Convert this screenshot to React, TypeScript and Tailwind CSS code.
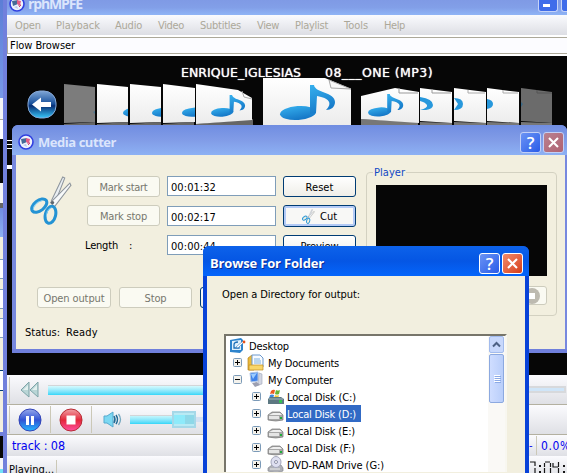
import { useLayoutEffect, useRef, useState, type ReactNode } from "react";

/** Text tracked so that it fills a given width. */
function Fit({ w, className = "pt-[2px]", children }: { w: number; className?: string; children: string }) {
  const ref = useRef<HTMLSpanElement>(null);
  const [spacing, setSpacing] = useState<number | null>(null);
  useLayoutEffect(() => {
    if (ref.current && spacing === null) {
      setSpacing((w - ref.current.getBoundingClientRect().width) / children.length);
    }
  }, [w, children, spacing]);
  return (
    <span ref={ref} className={`inline-block shrink-0 self-auto whitespace-pre ${className}`} style={{ letterSpacing: `${spacing ?? 0}px` }}>
      {children}
    </span>
  );
}

function AppIcon() {
  return (
    <svg width="16" height="16" viewBox="0 0 16 16" className="shrink-0">
      <circle cx="8" cy="8" r="7" fill="#eef2fc" stroke="#3040e0" strokeWidth="1.6" />
      <path d="M3 5l6-1v4l-5 2z" fill="#456a98" />
      <path d="M8 4l4 1-1 4-3-1z" fill="#e45b86" />
      <path d="M5 11l3-1 1 3z" fill="#b9c8ef" />
      <path d="M9 9l3 0-2 2" fill="none" stroke="#d0406b" />
    </svg>
  );
}

function Scissors({ size, h }: { size: number; h: number }) {
  return (
    <svg width={size} height={h} viewBox="0 0 42 48" className="shrink-0">
      <path d="M37 8L41 9 26 27 20 32z" fill="#d3cdbb" />
      <path d="M21 24L32 1l2 1-9 23z" fill="#e9eef2" stroke="#8c949c" strokeWidth="1" />
      <path d="M20 26L39 7l1 2-16 21z" fill="#f7f9fa" stroke="#8c949c" strokeWidth="1" />
      <circle cx="22" cy="26" r="1.6" fill="#5c6670" />
      <ellipse cx="9" cy="29" rx="8.5" ry="5" transform="rotate(-38 9 29)" fill="#f2efdf" stroke="#2493d4" strokeWidth="3" />
      <ellipse cx="20" cy="38" rx="5" ry="8.5" transform="rotate(14 20 38)" fill="#f2efdf" stroke="#2493d4" strokeWidth="3" />
      <path d="M3 33q1-7 9-9M16 40q0-7 5-9" fill="none" stroke="#7ccbf2" strokeWidth="1" />
    </svg>
  );
}

function Note({ x, y, s = 1 }: { x: number; y: number; s?: number }) {
  return (
    <g transform={`translate(${x} ${y}) scale(${s})`}>
      <ellipse cx="18" cy="28" rx="18" ry="7" transform="rotate(-4 18 28)" fill="url(#note)" />
      <path d="M30 0h4c1 8 21 7 21 17 0 5-4 8-9 8 7-7 3-12-9-14l-1 17-6 1z" fill="url(#note)" />
    </g>
  );
}

function Covers() {
  return (
    <svg width="560" height="47" viewBox="7 78 560 47" className="block shrink-0">
      <defs>
        <linearGradient id="note" x1="0" y1="0" x2="0.3" y2="1">
          <stop offset="0" stopColor="#36b0ee" />
          <stop offset="1" stopColor="#1679c8" />
        </linearGradient>
        <linearGradient id="orb" x1="0" y1="0" x2="0" y2="1">
          <stop offset="0" stopColor="#7fa6d6" />
          <stop offset="0.48" stopColor="#174f9a" />
          <stop offset="0.55" stopColor="#072d73" />
          <stop offset="1" stopColor="#38c8fa" />
        </linearGradient>
        <linearGradient id="page" x1="0" y1="0" x2="0" y2="1">
          <stop offset="0" stopColor="#ffffff" />
          <stop offset="1" stopColor="#ececec" />
        </linearGradient>
        <clipPath id="l2"><path d="M97 84h31v41H97z" /></clipPath>
        <clipPath id="l3"><path d="M130 84h31v41h-31z" /></clipPath>
        <clipPath id="l4"><path d="M163 84h32v41h-32z" /></clipPath>
        <clipPath id="r2"><path d="M420 84h32v41h-32z" /></clipPath>
      </defs>
      <rect x="28" y="91" width="28" height="27" rx="12" fill="url(#orb)" stroke="#87a9d8" strokeWidth="1" />
      <path d="M32 104.500l9-7v4.500h10v5H41v4.500z" fill="#fff" />
      <path d="M64 124l31-2v3H64zM97 124l31-2v3H97zM130 124l31-2v3h-31zM163 124l31-2v3h-31zM196 124l57-5v6h-57z" fill="#666" />
      <path d="M64 84l31 3v35l-31 1z" fill="#7c7c7c" />
      <path d="M93 112l2-1v3z" fill="#4f7890" />
      <path d="M97 84l31 3v35l-31 1z" fill="url(#page)" />
      <path d="M130 84l31 3v35l-31 1z" fill="url(#page)" />
      <path d="M163 84l32 4v34l-32 1z" fill="url(#page)" />
      <path d="M196 84l42 6 14 8v22l-56 4z" fill="url(#page)" />
      <path d="M242 91l2 6 8 2" fill="none" stroke="#aaa" />
      <g clipPath="url(#l2)"><Note x={123} y={94} s={0.65} /></g>
      <g clipPath="url(#l3)"><Note x={152} y={94} s={0.65} /></g>
      <g clipPath="url(#l4)"><Note x={182} y={94} s={0.65} /></g>
      <Note x={211} y={95} s={0.62} />
      <path d="M263 78h62l26 11v36h-88z" fill="url(#page)" />
      <path d="M329 80l2 8 20 1z" fill="#f8f8f8" stroke="#a8a8a8" strokeWidth="1" />
      <Note x={280} y={85} />
      <path d="M361 119l57 3v3h-57z" fill="#777" />
      <path d="M420 122l32 1v2h-32zM454 122l32 1v2h-32zM487 122l32 1v2h-32zM521 122l31 1v2h-31z" fill="#777" />
      <path d="M361 96l34-8 24 4v31l-58-4z" fill="url(#page)" />
      <path d="M399 88v5l19 0" fill="none" stroke="#999" />
      <Note x={368} y={94} s={0.64} />
      <path d="M420 88l32 4v31l-32-2z" fill="url(#page)" />
      <path d="M432 89v4h19" fill="none" stroke="#999" />
      <g clipPath="url(#r2)"><path d="M420 97q13 2 13 8 0 4-7 5-3 0-6 0 8-2 7-5-2-3-7-4z" fill="#2798dc" /></g>
      <path d="M454 88l32 4v31l-32-2z" fill="url(#page)" />
      <path d="M468 90v3h17" fill="none" stroke="#aaa" />
      <path d="M487 88l32 4v31l-32-2z" fill="url(#page)" />
      <path d="M503 90v3h15" fill="none" stroke="#aaa" />
      <path d="M454 98q9 0 9 6t-9 6l4-6z" fill="#2798dc" />
      <path d="M487 99q6 1 6 5t-6 5z" fill="#2798dc" />
      <path d="M521 88l31 4v31l-31-2z" fill="#6b6b6b" />
      <path d="M521 102l2 2-2 3z" fill="#3b6a88" />
      <path d="M537 90v3h15" fill="none" stroke="#555" />
    </svg>
  );
}

function CaptionButton({ kind, muted = false }: { kind: "help" | "close"; muted?: boolean }) {
  const color = kind === "help"
    ? "bg-linear-to-br from-[#6b93f4] to-[#2a5ae8]"
    : muted
      ? "bg-linear-to-br from-[#b98190] to-[#b06272]"
      : "bg-linear-to-br from-[#f08a6a] to-[#d63a10]";
  return (
    <div className={`flex h-[21px] w-[21px] shrink-0 items-center justify-center rounded-[3px] border ${muted ? "border-[#c3d0f6]" : "border-white"} ${color}`}>
      {kind === "help" ? (
        <span className="font-['Open_Sans',sans-serif] text-[17px] leading-none font-semibold text-white">?</span>
      ) : (
        <svg width="13" height="13" viewBox="0 0 13 13"><path d="M2 2l9 9M11 2l-9 9" stroke="#fff" strokeWidth="2.1" /></svg>
      )}
    </div>
  );
}

function Button({ w, h = 21, disabled = false, hot = false, children }: { w: string; h?: number; disabled?: boolean; hot?: boolean; children?: ReactNode }) {
  const look = disabled
    ? "border-[#cdccbd] bg-[#fafaf2] text-[#77776e]"
    : hot
      ? "border-[#003c74] bg-[#f8f8f6] text-black inset-ring-2 inset-ring-[#b4cbf6]"
      : "border-[#003c74] bg-linear-to-b from-white to-[#efeee8] text-black";
  return (
    <div className={`flex shrink-0 items-center justify-center rounded-[3px] border ${h === 22 ? "h-[22px]" : "h-[21px]"} ${w} ${look}`}>
      {children}
    </div>
  );
}

const Field = ({ value }: { value: string }) => (
  <div className="flex h-5 w-[109px] shrink-0 items-center border border-[#7f9db9] bg-white pl-[3px]">
    <Fit w={45} className="pt-[3px]">{value}</Fit>
  </div>
);

const menu: [string, number, string][] = [
  ["Open", 26, "w-[41px]"], ["Playback", 44, "w-[59px]"], ["Audio", 27, "w-[43px]"], ["Video", 26, "w-[42px]"],
  ["Subtitles", 41, "w-[57px]"], ["View", 22, "w-[38px]"], ["Playlist", 33, "w-[49px]"], ["Tools", 24, "w-10"], ["Help", 21, "w-[30px]"],
];

function MainWindow() {
  return (
    <div className="absolute inset-0 left-[3px] flex flex-col border-l-4 border-[#7180dc] bg-[#060606]">
      <div className="flex h-[15px] shrink-0 items-end bg-linear-to-b from-[#7f9ae5] via-[#829fe8] to-[#8fb4f6] pl-[2px]">
        <div className="-mb-1 flex h-[22px] grow items-center gap-[3px] pb-2">
          <AppIcon />
          <Fit w={54} className="font-['Open_Sans',sans-serif] text-[14px] leading-[14px] font-bold text-[#dbe5fc]">rphMPFE</Fit>
        </div>
        <div className="mb-[3px] flex h-3 w-5 items-end rounded-b-[3px] border border-t-0 border-[#c5d3f8] bg-[#3f6cea] pb-1 pl-1"><div className="h-[3px] w-[7px] bg-white" /></div>
        <div className="mb-[3px] ml-[3px] h-3 w-[6px] rounded-bl-[3px] border-b border-l border-[#c5d3f8] bg-[#3f6cea]" />
      </div>
      <div className="flex h-5 shrink-0 items-center bg-linear-to-b from-[#fafbfe] to-[#dddee4] pl-2 text-[#aca899]">
        {menu.map(([label, w, cell]) => <div key={label} className={`flex shrink-0 ${cell}`}><Fit w={w}>{label}</Fit></div>)}
      </div>
      <div className="flex h-[21px] shrink-0 border-b-2 border-white bg-white pt-[2px]">
        <div className="flex h-[17px] grow items-center border border-r-0 border-[#aca899] bg-[#fcfcff] pl-[2px]"><Fit w={65} className="pt-px">Flow Browser</Fit></div>
      </div>
      <div className="flex h-[22px] shrink-0 items-start pt-2 pl-[174px] font-['DejaVu_Sans',sans-serif] text-[12.5px] leading-4 text-white text-shadow-[0_0_1px_#ffffff]">
        <div className="w-36 shrink-0"><Fit w={120} className="pt-px">ENRIQUE_IGLESIAS</Fit></div>
        <Fit w={108} className="pt-px">08___ONE (MP3)</Fit>
      </div>
      <Covers />
      <div className="flex h-[250px] shrink-0 flex-col pt-[15px]">
        <div className="flex w-[5px] flex-col gap-[3px]"><div className="h-px bg-white" /><div className="h-px bg-white" /><div className="h-px bg-white" /></div>
        <div className="mt-4 h-1 w-[5px] bg-white" />
      </div>
      <div className="flex h-[30px] shrink-0 items-center border-b border-[#b3b0a0] bg-linear-to-b from-[#fbfbfe] to-[#dfe0e5] pl-[2px]">
        <div className="mr-[10px] h-[26px] w-px bg-[#cbc8b7]" />
        <svg width="19" height="18" viewBox="0 0 19 18" className="shrink-0">
          <path d="M9 1v15L1 9zM18 1v15L10 9z" fill="#b9d5d6" stroke="#7ea4a8" strokeWidth="1" />
          <path d="M8 4v5H3zM17 4v5h-5z" fill="#e3f0ef" />
        </svg>
        <div className="ml-[9px] h-[10px] w-[300px] shrink-0 border-t border-[#d3d5d8] bg-linear-to-b from-[#d5fafe] to-[#2ed6f8]" />
        <div className="mr-px h-[7px] grow border-2 border-[#d7d9dc] bg-[#cfe5f8]" />
      </div>
      <div className="flex h-[30px] shrink-0 items-center border-b border-[#b3b0a0] bg-linear-to-b from-[#fbfbfe] to-[#dfe0e5] pl-[2px]">
        <div className="mr-2 h-[27px] w-px bg-[#cbc8b7]" />
        <svg width="24" height="24" viewBox="0 0 24 24" className="shrink-0">
          <defs>
            <linearGradient id="blueBall" x1="0" y1="0" x2="0" y2="1"><stop stopColor="#98a9eb" /><stop offset="0.5" stopColor="#3053d4" /><stop offset="1" stopColor="#22b8ff" /></linearGradient>
            <linearGradient id="redBall" x1="0" y1="0" x2="0" y2="1"><stop stopColor="#f0a3a6" /><stop offset="0.5" stopColor="#e4263a" /><stop offset="1" stopColor="#ff4fa0" /></linearGradient>
          </defs>
          <circle cx="12" cy="12" r="11" fill="url(#blueBall)" stroke="#3344b8" />
          <path d="M8 8h3v9H8zM13 8h3v9h-3z" fill="#fff" />
        </svg>
        <div className="mx-2 h-[27px] w-px shrink-0 bg-[#cbc8b7]" />
        <svg width="24" height="24" viewBox="0 0 24 24" className="shrink-0">
          <circle cx="12" cy="12" r="11" fill="url(#redBall)" stroke="#b82a34" />
          <path d="M7.500 7.500h9v9h-9z" fill="#fff" />
        </svg>
        <div className="mr-[11px] ml-2 h-[27px] w-px shrink-0 bg-[#cbc8b7]" />
        <svg width="20" height="17" viewBox="0 0 20 17" className="shrink-0">
          <path d="M1 5h3l6-4v15l-6-4H1z" fill="#7cd8f2" stroke="#55a9cf" />
          <path d="M11 5q2 3.500 0 7M13 4q3 4.500 0 9" fill="none" stroke="#206a94" strokeWidth="1.500" />
          <path d="M15.500 3q4 5.500 0 11" fill="none" stroke="#77a9c0" strokeWidth="1.300" />
        </svg>
        <div className="ml-[7px] h-[9px] w-[42px] shrink-0 border-t border-[#d3d5d8] bg-linear-to-b from-[#c3f6fd] to-[#2ed6f8]" />
        <div className="flex h-[17px] w-6 shrink-0 items-center border-2 border-[#a5d8e8] bg-[#b9eaf4]"><div className="h-[9px] w-[11px] bg-[#8eeafa]" /><div className="h-[9px] w-[9px] bg-[#8ed8e8]" /></div>
        <div className="h-[5px] w-10 shrink-0 bg-[#d2e1f2]" />
      </div>
      <div className="flex h-[21px] shrink-0 items-center bg-linear-to-b from-[#fbfbfe] to-[#dfe0e5] pl-[5px] text-[#0000f0]">
        <Fit w={53} className="pt-px text-[12.5px]">track : 08</Fit>
        <span className="ml-[464px] w-[7px] shrink-0">-</span>
        <div className="mr-[4px] h-[19px] w-px shrink-0 bg-[#cbc8b7]" />
        <Fit w={30} className="pt-px text-[12px]">0.0%</Fit>
      </div>
      <div className="flex h-[17px] shrink-0 items-start overflow-hidden bg-linear-to-b from-[#fbfbfe] to-[#e5e6ea] pl-[2px]">
        <Fit w={45} className="mt-[7px]">Playing...</Fit>
        <div className="mt-1 ml-[2px] h-5 w-px shrink-0 bg-[#cbc8b7]" />
        <svg width="38" height="12" viewBox="0 0 38 12" className="mt-[5px] ml-[473px] shrink-0" fill="none" stroke="#161616" strokeWidth="1.200">
          <path d="M0 1h5v4M5 7v5M15 1h5M14.500 2v4M20.500 2v4M14.500 7v5M20.500 7v5M23 2v4h5M28.500 1v5M28.500 7v5" />
          <path d="M9 5h2M9 11h2M33 5h2M33 11h2" strokeWidth="2" />
        </svg>
      </div>
    </div>
  );
}

function CutterWindow() {
  return (
    <div className="absolute top-[125px] left-3 flex h-[228px] w-[555px] flex-col overflow-hidden rounded-t-[6px] border-b-4 border-[#6f7fdb] bg-[#7788df]">
      <div className="flex h-[30px] shrink-0 items-center bg-linear-to-b from-[#708de1] via-[#819ce7] to-[#8db1f4] pt-1 pr-[3px] pl-[6px]">
        <AppIcon />
        <Fit w={78} className="ml-1 font-['Open_Sans',sans-serif] text-[13px] font-bold text-[#dbe5fc]">Media cutter</Fit>
        <div className="ml-auto flex gap-[2px]"><CaptionButton kind="help" muted /><CaptionButton kind="close" muted /></div>
      </div>
      <div className="mr-[2px] ml-1 flex grow bg-[#f2efdf]">
        <div className="w-[350px] shrink-0 pt-[21px]">
          <div className="flex h-[111px] items-start">
            <div className="w-[71px] shrink-0 pl-[14px]"><Scissors size={43} h={49} /></div>
            <div className="flex w-20 shrink-0 flex-col gap-2">
              <Button w="w-[73px]" disabled><Fit w={48}>Mark start</Fit></Button>
              <Button w="w-[73px]" disabled><Fit w={47}>Mark stop</Fit></Button>
              <div className="-ml-[2px] flex h-5 items-center gap-[11px] pt-px"><Fit w={33}>Length</Fit><span className="pt-[2px]">:</span></div>
            </div>
            <div className="flex w-[116px] shrink-0 flex-col">
              <Field value="00:01:32" /><div className="h-[10px]" /><Field value="00:02:17" /><div className="h-[9px]" /><Field value="00:00:44" />
            </div>
            <div className="flex flex-col gap-2">
              <Button w="w-[73px]"><Fit w={28}>Reset</Fit></Button>
              <Button w="w-[73px]" h={22} hot><div className="flex items-center gap-[5px]"><Scissors size={13} h={15} /><Fit w={17}>Cut</Fit></div></Button>
              <Button w="w-[73px]"><Fit w={38}>Preview</Fit></Button>
            </div>
          </div>
          <div className="flex gap-2 pl-[21px]">
            <Button w="w-[74px]" disabled><Fit w={61}>Open output</Fit></Button>
            <Button w="w-[73px]" disabled><Fit w={22}>Stop</Fit></Button>
            <Button w="w-[73px]" />
          </div>
          <div className="mt-4 flex gap-[6px] pl-[9px]"><Fit w={35}>Status:</Fit><Fit w={32}>Ready</Fit></div>
        </div>
        <div className="pt-[9px]">
          <fieldset className="h-[152px] w-[191px] rounded-[4px] border border-[#d3d1c1] pl-[9px]">
            <legend className="-ml-[3px] flex h-4 items-center bg-[#f2efdf] px-px text-[#1048c4]"><Fit w={31}>Player</Fit></legend>
            <div className="mt-[5px] h-[91px] w-[171px] bg-[#060606]" />
            <div className="mt-[10px] flex h-5 w-[171px] justify-end">
              <div className="flex h-[19px] w-10 items-center justify-end rounded-[3px] border border-[#cdccbd] bg-[#fafaf2] pr-[6px]">
                <div className="flex h-4 w-4 items-center justify-center rounded-full bg-[#bdbab0]"><div className="h-[6px] w-[6px] bg-white" /></div>
              </div>
            </div>
          </fieldset>
        </div>
      </div>
    </div>
  );
}

type IconKind = "desktop" | "documents" | "computer" | "system" | "disk" | "dvd";

function TreeIcon({ kind }: { kind: IconKind }) {
  return (
    <svg width="17" height="17" viewBox="0 0 17 17" className="shrink-0">
      {kind === "desktop" && <>
        <path d="M1 3l11-2 2 2v10l-3 3-10-1z" fill="#2c83cc" />
        <path d="M3 4l9-1v10H3z" fill="#dff0fc" />
        <path d="M5 8q0-3 4-3M5 8v3h5V8" fill="none" stroke="#1c6fb8" strokeWidth="1.300" />
        <path d="M7 10l7-6 1 1-6 6z" fill="#fff" stroke="#3a80bd" strokeWidth=".6" /><circle cx="15" cy="5" r="1.400" fill="#e5521a" />
      </>}
      {kind === "documents" && <>
        <path d="M1 4l4-3 2 2v13H1z" fill="#e9b93c" stroke="#b98318" strokeWidth=".7" />
        <path d="M5 1h8l3 3v9H5z" fill="#f8fbff" stroke="#6b98cd" />
        <path d="M7 5h6M7 7h7M7 9h7" stroke="#7cb0df" />
        <path d="M2 11h14v5H2z" fill="#f8d66a" stroke="#c08d20" strokeWidth=".7" />
      </>}
      {kind === "computer" && <>
        <path d="M3 2l8-1v9l-7 1z" fill="#3f82ea" stroke="#aec4e4" /><path d="M4 3l6-1-4 6z" fill="#9cccff" />
        <path d="M12 2l3 1v10l-4 1z" fill="#d2d6e2" stroke="#9da5b8" strokeWidth=".6" />
        <path d="M5 12l5-1 3 3-5 2z" fill="#9c9fb0" />
      </>}
      {kind === "system" && <>
        <path d="M4 3q2-2 4-1L7 6Q5 5 3 6z" fill="#ec5a20" /><path d="M9 2q2 1 4 0l-1 4q-2 1-4 0z" fill="#69b536" />
        <path d="M3 7q2-1 4 0l-1 4H2z" fill="#3c89dc" /><path d="M8 7q2 1 4 0l-1 4H7z" fill="#f5c633" />
        <path d="M1 11l2-2h11l3 2v5H1z" fill="#5d7882" /><path d="M2 11h14" stroke="#a3b8bc" /><path d="M12 12h3v3h-3z" fill="#35c052" />
      </>}
      {kind === "disk" && <>
        <path d="M1 10l4-3h8l3 3v5q-7 2-15 0z" fill="#a7a7a7" stroke="#777" strokeWidth=".7" />
        <path d="M2 10l4-2h7l2 2z" fill="#eee" /><path d="M2 11h10v3H2z" fill="#e5e5e5" /><path d="M13 12h2v2h-2z" fill="#1fae39" />
      </>}
      {kind === "dvd" && <>
        <path d="M1 12l4-3h9l2 3v3l-7 2-8-2z" fill="#aeb0b6" stroke="#868991" strokeWidth=".7" />
        <ellipse cx="9" cy="6" rx="5" ry="5.500" fill="#dedff0" stroke="#a5a8bc" /><circle cx="9" cy="6" r="1.500" fill="#fff" stroke="#8e91a9" />
        <path d="M3 13h10" stroke="#eee" />
      </>}
    </svg>
  );
}

const Toggle = ({ open = false }: { open?: boolean }) => (
  <svg width="9" height="9" viewBox="0 0 9 9" className="shrink-0">
    <rect x=".5" y=".5" width="8" height="8" rx="1" fill="#f4f2ec" stroke="#7b9ab8" />
    <path d={open ? "M2 4.500h5" : "M2 4.500h5M4.500 2v5"} stroke="#000" />
  </svg>
);

type Row = { label: string; w: number; icon: IconKind; level: number; open?: boolean; selected?: boolean };
const rows: Row[] = [
  { label: "Desktop", w: 40, icon: "desktop", level: 0 },
  { label: "My Documents", w: 71, icon: "documents", level: 1 },
  { label: "My Computer", w: 65, icon: "computer", level: 1, open: true },
  { label: "Local Disk (C:)", w: 69, icon: "system", level: 2 },
  { label: "Local Disk (D:)", w: 69, icon: "disk", level: 2, selected: true },
  { label: "Local Disk (E:)", w: 68, icon: "disk", level: 2 },
  { label: "Local Disk (F:)", w: 68, icon: "disk", level: 2 },
  { label: "DVD-RAM Drive (G:)", w: 97, icon: "dvd", level: 2 },
];

function FolderDialog() {
  return (
    <div className="absolute top-[246px] left-[203px] flex h-[227px] w-[326px] flex-col overflow-hidden rounded-t-[6px] bg-[#0842d8]">
      <div className="flex h-[30px] shrink-0 items-center bg-linear-to-b from-[#0d62ea] via-[#0556e4] to-[#0465fb] pt-1 pr-[6px] pl-[7px]">
        <Fit w={114} className="font-['Open_Sans',sans-serif] text-[13px] font-bold text-white text-shadow-[1px_1px_0_#0b2c90]">Browse For Folder</Fit>
        <div className="ml-auto flex gap-[2px]"><CaptionButton kind="help" /><CaptionButton kind="close" /></div>
      </div>
      <div className="mx-1 flex grow flex-col bg-[#f2efdf] pt-[11px] pl-[15px]">
        <div className="flex h-[14px] shrink-0"><Fit w={138} className="pt-px">Open a Directory for output:</Fit></div>
        <div className="mt-[33px] ml-[2px] flex h-[138px] w-[283px] shrink-0 overflow-hidden border-2 border-b-0 border-t-[#77756a] border-r-[#f8f7f0] border-l-[#77756a] bg-white">
          <div className="grow pt-px">
            {rows.map((r) => (
              <div key={r.label} className={`flex h-[17px] items-center ${r.level === 0 ? "pl-[3px]" : r.level === 1 ? "pl-[7px]" : "pl-[26px]"}`}>
                {r.level > 0 && <div className={`flex ${r.level === 1 ? "mr-[5px]" : "mr-[6px]"}`}><Toggle open={r.open} /></div>}
                <TreeIcon kind={r.icon} />
                <div className={`ml-[2px] flex h-[17px] items-center ${r.selected ? "w-[75px] bg-[#316ac5] text-white" : ""} ${r.level === 2 ? "pl-px" : r.level === 1 ? "pl-[2px]" : "pl-px"}`}><Fit w={r.w}>{r.label}</Fit></div>
              </div>
            ))}
          </div>
          <div className="flex w-[17px] shrink-0 flex-col bg-[#faf9f6] px-px">
            <div className="flex h-[17px] shrink-0 items-center justify-center rounded-[2px] border border-[#a2bbed] bg-[#c8d8fc]">
              <svg width="9" height="7" viewBox="0 0 9 7"><path d="M1 5.500l3.500-3.500L8 5.500" fill="none" stroke="#4d6185" strokeWidth="2" /></svg>
            </div>
            <div className="mt-px flex h-[49px] shrink-0 flex-col items-center justify-center gap-px rounded-[2px] border border-[#8ca9e0] bg-linear-to-r from-[#cfddff] to-[#b9cefa]">
              {[0, 1, 2, 3].map((i) => <div key={i} className="h-px w-[6px] bg-white shadow-[1px_1px_0_#8caae6]" />)}
            </div>
          </div>
        </div>
      </div>
    </div>
  );
}

function BackgroundEdge() {
  return (
    <div className="flex h-[473px] w-[3px] flex-col overflow-hidden bg-[#f2efdf]">
      <div className="h-[98px] shrink-0 bg-linear-to-b from-[#5c7ed6] to-[#7899e8]" />
      <div className="h-[22px] shrink-0 border-b border-[#aca899] bg-[#f4f4f6]" />
      <div className="h-[19px] shrink-0 bg-white" />
      <div className="h-11 shrink-0 bg-[#060606]" />
      <div className="h-5 shrink-0 bg-[#f5f5f5]" />
      <div className="h-[5px] shrink-0 bg-[#666]" />
      <div className="h-[29px] shrink-0 bg-linear-to-b from-[#718de1] to-[#8db1f4]" />
      <div className="mt-[22px] h-5 shrink-0 border-y border-[#7f9db9] bg-white" />
      <div className="mt-[10px] h-5 shrink-0 border-y border-[#7f9db9] bg-white" />
      <div className="mt-[9px] h-5 shrink-0 border-y border-[#7f9db9] bg-white" />
      <div className="mt-8 h-[21px] shrink-0 border-y border-[#003c74] bg-white" />
      <div className="mt-[41px] h-1 shrink-0 bg-[#6f7fdb]" />
      <div className="h-[22px] shrink-0 bg-[#060606]" />
      <div className="h-[11px] shrink-0 bg-[#f5f5f8]" />
      <div className="h-2 shrink-0 bg-[#70e2f8]" />
    </div>
  );
}

export default function App() {
  return (
    <div className="relative h-[473px] w-[567px] overflow-hidden bg-[#060606] font-['DejaVu_Sans_Condensed','DejaVu_Sans',sans-serif] text-[11px] leading-[14px] text-black">
      <BackgroundEdge />
      <MainWindow />
      <CutterWindow />
      <FolderDialog />
    </div>
  );
}
